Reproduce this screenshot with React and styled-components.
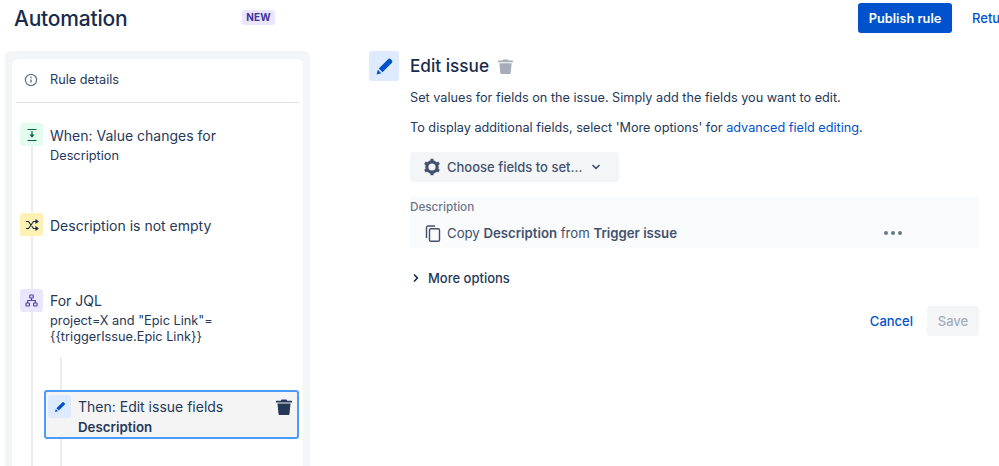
import React from "react";
import styled, { createGlobalStyle } from "styled-components";

const Global = createGlobalStyle`
  html, body { margin: 0; padding: 0; background: #fff; }
  body { font-family: Inter, "Liberation Sans", sans-serif; color: #172b4d; overflow: hidden; }
`;

const Page = styled.div`
  width: 999px;
  height: 466px;
  overflow: hidden;
  display: flex;
  flex-direction: column;
`;

const Header = styled.header`
  height: 51px;
  flex: none;
  display: flex;
  align-items: flex-start;
  white-space: nowrap;
  & > * { flex: none; }
`;

const Title = styled.h1`
  margin: 5px 0 0 14px;
  width: 228px;
  font-size: 21px;
  line-height: 27px;
  font-weight: 500;
  letter-spacing: -0.2px;
  color: #172b4d;
`;

const Badge = styled.span`
  margin-top: 10px;
  width: 33px;
  height: 15px;
  border-radius: 3px;
  background: #eae6ff;
  color: #403294;
  font-size: 10px;
  font-weight: 700;
  line-height: 15px;
  text-align: center;
  letter-spacing: 0.2px;
`;

const Publish = styled.button`
  margin: 3px 0 0 583px;
  width: 94px;
  height: 30px;
  border: 0;
  border-radius: 3px;
  background: #0052cc;
  color: #fff;
  font: 600 12.8px Inter, sans-serif;
  padding: 0;
`;

const ReturnLink = styled.a`
  margin: 10px 0 0 20px;
  color: #0052cc;
  font-size: 13px;
  line-height: 16px;
  font-weight: 500;
`;

const Body = styled.main`
  flex: 1;
  display: flex;
  min-height: 0;
`;

const Sidebar = styled.aside`
  margin-left: 5px;
  width: 291px;
  padding: 8px 7px 0;
  background: #f4f5f7;
  border-radius: 6px 6px 0 0;
  display: flex;
  flex-direction: column;
  overflow: hidden;
  flex: none;
`;

const RuleCard = styled.div`
  position: relative;
  flex: 1;
  background: #fff;
  border-radius: 6px 6px 0 0;
  padding: 0 4px;
  display: flex;
  flex-direction: column;
`;

const Details = styled.div`
  height: 41px;
  padding-bottom: 2px;
  display: flex;
  align-items: center;
  gap: 12px;
  padding-left: 8px;
  border-bottom: 1px solid #dfe1e6;
  font-size: 12.7px;
  color: #253858;
  flex: none;
`;

const Trail = styled.div`
  position: absolute;
  left: ${(p) => p.$left}px;
  top: ${(p) => p.$top}px;
  bottom: 0;
  width: 2px;
  background: #ebecf0;
`;

const Step = styled.div`
  position: relative;
  height: ${(p) => p.$height}px;
  margin-top: ${(p) => p.$mt || 0}px;
  flex: none;
  display: flex;
  gap: 7px;
  padding-left: 4px;
`;

const IconTile = styled.div`
  width: ${(p) => p.$size || 23}px;
  height: ${(p) => p.$size || 23}px;
  flex: none;
  border-radius: 3px;
  background: ${(p) => p.$bg};
  color: ${(p) => p.$fg};
  display: flex;
  align-items: center;
  justify-content: center;
`;

const StepText = styled.div`
  display: flex;
  flex-direction: column;
  padding-top: ${(p) => p.$pt ?? 3}px;
`;

const StepTitle = styled.div`
  font-size: 14px;
  line-height: 20px;
  color: #253858;
  white-space: nowrap;
`;

const StepSub = styled.div`
  font-size: ${(p) => (p.$bold ? 13.3 : 12.75)}px;
  line-height: 16px;
  margin-top: ${(p) => p.$mt ?? 2}px;
  font-weight: ${(p) => (p.$bold ? 600 : 400)};
  color: #253858;
`;

const Selected = styled.div`
  position: relative;
  margin: 45px 0 0 28px;
  width: 255px;
  height: 49px;
  box-sizing: border-box;
  border: 2px solid #4c9aff;
  border-radius: 3px;
  background: #f4f4f4;
  padding: 3px 2px;
  display: flex;
  gap: 7px;
  flex: none;
`;

const SelectedTrash = styled.span`
  position: absolute;
  right: 4px;
  top: 6px;
  color: #253858;
  display: flex;
`;

const Pane = styled.section`
  margin-left: 59px;
  flex: 1;
  min-width: 0;
  padding-right: 20px;
  display: flex;
  gap: 11px;
`;

const PaneContent = styled.div`
  flex: 1;
  min-width: 0;
  display: flex;
  flex-direction: column;
`;

const Heading = styled.div`
  display: flex;
  align-items: center;
  gap: 8px;
  height: 30px;
  color: #a5adba;
`;

const HeadingText = styled.h2`
  margin: 0;
  font-size: 17.2px;
  line-height: 30px;
  font-weight: 500;
  color: #172b4d;
`;

const Para = styled.p`
  margin: ${(p) => p.$mt}px 0 0;
  font-size: 12.7px;
  line-height: 20px;
  color: #253858;
  white-space: nowrap;
`;

const TextLink = styled.a`
  color: #0052cc;
`;

const Choose = styled.button`
  margin-top: 14px;
  width: 209px;
  height: 30px;
  border: 0;
  border-radius: 3px;
  background: #f4f5f7;
  color: #42526e;
  font: 500 13px Inter, sans-serif;
  display: flex;
  align-items: center;
  padding: 0 0 0 13px;
  gap: 6px;
`;

const ChooseCaret = styled.span`
  margin-left: 3px;
  display: flex;
`;

const FieldBox = styled.div`
  margin-top: 15px;
  height: 51px;
  background: #fafbfc;
  display: flex;
  flex-direction: column;
`;

const FieldLabel = styled.div`
  font-size: 11.7px;
  line-height: 14px;
  margin-top: 3px;
  font-weight: 500;
  color: #6b778c;
`;

const FieldRow = styled.div`
  display: flex;
  align-items: center;
  margin-top: 7px;
  padding-left: 15px;
  font-size: 13.2px;
  color: #42526e;
  gap: 6px;
  height: 24px;
`;

const Strong = styled.strong`
  font-weight: 600;
`;

const Dots = styled.span`
  margin-left: auto;
  margin-right: 77px;
  display: flex;
  gap: 3px;
`;

const Dot = styled.i`
  width: 4px;
  height: 4px;
  border-radius: 50%;
  background: #6b778c;
`;

const More = styled.div`
  margin-top: 20px;
  display: flex;
  align-items: center;
  gap: 7px;
  padding-left: 1px;
  height: 20px;
  font-size: 13px;
  font-weight: 500;
  color: #253858;
`;

const Actions = styled.div`
  margin-top: 18px;
  display: flex;
  justify-content: flex-end;
  align-items: center;
  gap: 14px;
`;

const Cancel = styled.a`
  color: #0052cc;
  font-size: 13px;
  font-weight: 500;
`;

const Save = styled.button`
  width: 52px;
  height: 30px;
  border: 0;
  border-radius: 3px;
  background: #f4f5f7;
  color: #a5adba;
  font: 500 13px Inter, sans-serif;
  padding: 0;
`;

const Pencil = ({ size = 12 }) => (
  <svg width={size} height={size} viewBox="0 0 24 24" fill="currentColor">
    <path d="M16.500 2.800a2.400 2.400 0 0 1 3.400 0l1.300 1.300a2.400 2.400 0 0 1 0 3.400L9.500 19.200 4.800 14.500Z" />
    <path d="M3.600 16 8 20.400 2 22Z" />
  </svg>
);

const Trash = ({ size = 18 }) => (
  <svg width={size} height={size} viewBox="0 0 18 18" fill="currentColor">
    <path d="M6.500 1.500h5l.6 1.200h4.400a.6.6 0 0 1 .5.600v1.200H1V3.300a.6.6 0 0 1 .5-.6h4.400Z" />
    <path d="M2.500 5.500h13l-1 10.500a1.200 1.200 0 0 1-1.200 1H4.700a1.200 1.200 0 0 1-1.200-1Z" />
  </svg>
);

const Info = () => (
  <svg width="14" height="14" viewBox="0 0 14 14" fill="none" stroke="#6b778c" strokeWidth="1.300">
    <circle cx="7" cy="7" r="5.600" />
    <path d="M7 6.400v3.200" strokeWidth="1.500" />
    <circle cx="7" cy="4.400" r=".8" fill="#6b778c" stroke="none" />
  </svg>
);

const TriggerIcon = () => (
  <svg width="12" height="14" viewBox="0 0 12 14" fill="none" stroke="#006644" strokeWidth="1.200">
    <path d="M1.500 1.500h9M1.500 12.500h9M6 3v6" />
    <path d="M3.500 6.500h5L6 9.800Z" fill="#006644" stroke="none" />
  </svg>
);

const ShuffleIcon = () => (
  <svg width="14" height="12" viewBox="0 0 14 12" fill="none" stroke="#172b4d" strokeWidth="1.100">
    <path d="M1 2.500h2.500l5 7H12M1 9.500h2.500l5-7H12" />
    <path d="M11 1l2 1.500-2 1.500ZM11 8l2 1.500-2 1.500Z" fill="#172b4d" />
  </svg>
);

const BranchIcon = () => (
  <svg width="13" height="13" viewBox="0 0 13 13" fill="none" stroke="#5243aa" strokeWidth="1.200">
    <rect x="4.800" y="1" width="3.400" height="3" rx=".5" />
    <rect x="1" y="9" width="3.400" height="3" rx=".5" />
    <rect x="8.600" y="9" width="3.400" height="3" rx=".5" />
    <path d="M6.500 4v2.500M2.700 9V6.500h7.600V9" />
  </svg>
);

const Gear = () => (
  <svg width="18" height="18" viewBox="0 0 18 18" fill="none" stroke="#42526e">
    <circle cx="9" cy="9" r="5.200" strokeWidth="3.200" />
    <path d="M9 .8v3M9 14.200v3M1.900 4.900l2.600 1.500M13.500 11.600l2.600 1.500M1.900 13.100l2.600-1.500M13.500 6.400l2.600-1.500" strokeWidth="3" />
  </svg>
);

const Chevron = ({ down, color = "#42526e" }) => (
  <svg width="10" height="10" viewBox="0 0 10 10" fill="none" stroke={color} strokeWidth="1.700" strokeLinecap="round" strokeLinejoin="round">
    <path d={down ? "M2 3.500 5 6.500 8 3.500" : "M3.500 2 6.500 5 3.500 8"} />
  </svg>
);

const Copy = () => (
  <svg width="16" height="17" viewBox="0 0 16 17" fill="none" stroke="#42526e" strokeWidth="1.400" strokeLinejoin="round">
    <path d="M1.500 13V2.500A1.500 1.500 0 0 1 3 1H10" />
    <rect x="4.500" y="3.700" width="10" height="12.500" rx="1.300" />
  </svg>
);

export default function App() {
  return (
    <Page>
      <Global />
      <Header>
        <Title>Automation</Title>
        <Badge>NEW</Badge>
        <Publish>Publish rule</Publish>
        <ReturnLink>Return to list</ReturnLink>
      </Header>
      <Body>
        <Sidebar>
          <RuleCard>
            <Trail $left={19} $top={80} />
            <Trail $left={48} $top={298} />
            <Details>
              <Info />
              Rule details
            </Details>
            <Step $height={90} $mt={20}>
              <IconTile $bg="#e3fcef"><TriggerIcon /></IconTile>
              <StepText>
                <StepTitle>When: Value changes for</StepTitle>
                <StepSub>Description</StepSub>
              </StepText>
            </Step>
            <Step $height={76}>
              <IconTile $bg="#fff0b3"><ShuffleIcon /></IconTile>
              <StepText>
                <StepTitle>Description is not empty</StepTitle>
              </StepText>
            </Step>
            <Step $height={56}>
              <IconTile $bg="#eae6ff"><BranchIcon /></IconTile>
              <StepText $pt={2}>
                <StepTitle>For JQL</StepTitle>
                <StepSub>project=X and "Epic Link"=<br />{"{{triggerIssue.Epic Link}}"}</StepSub>
              </StepText>
            </Step>
            <Selected>
              <IconTile $bg="#deebff" $fg="#0052cc"><Pencil /></IconTile>
              <StepText $pt={2}>
                <StepTitle>Then: Edit issue fields</StepTitle>
                <StepSub $bold $mt={2}>Description</StepSub>
              </StepText>
              <SelectedTrash><Trash /></SelectedTrash>
            </Selected>
          </RuleCard>
        </Sidebar>
        <Pane>
          <IconTile $bg="#deebff" $fg="#0052cc" $size={30}><Pencil size={19} /></IconTile>
          <PaneContent>
            <Heading>
              <HeadingText>Edit issue</HeadingText>
              <Trash size={17} />
            </Heading>
            <Para $mt={7}>Set values for fields on the issue. Simply add the fields you want to edit.</Para>
            <Para $mt={10}>To display additional fields, select 'More options' for <TextLink>advanced field editing</TextLink>.</Para>
            <Choose><Gear />Choose fields to set...<ChooseCaret><Chevron down /></ChooseCaret></Choose>
            <FieldBox>
              <FieldLabel>Description</FieldLabel>
              <FieldRow>
                <Copy />
                <span>Copy <Strong>Description</Strong> from <Strong>Trigger issue</Strong></span>
                <Dots><Dot /><Dot /><Dot /></Dots>
              </FieldRow>
            </FieldBox>
            <More><Chevron color="#172b4d" />More options</More>
            <Actions>
              <Cancel>Cancel</Cancel>
              <Save>Save</Save>
            </Actions>
          </PaneContent>
        </Pane>
      </Body>
    </Page>
  );
}
